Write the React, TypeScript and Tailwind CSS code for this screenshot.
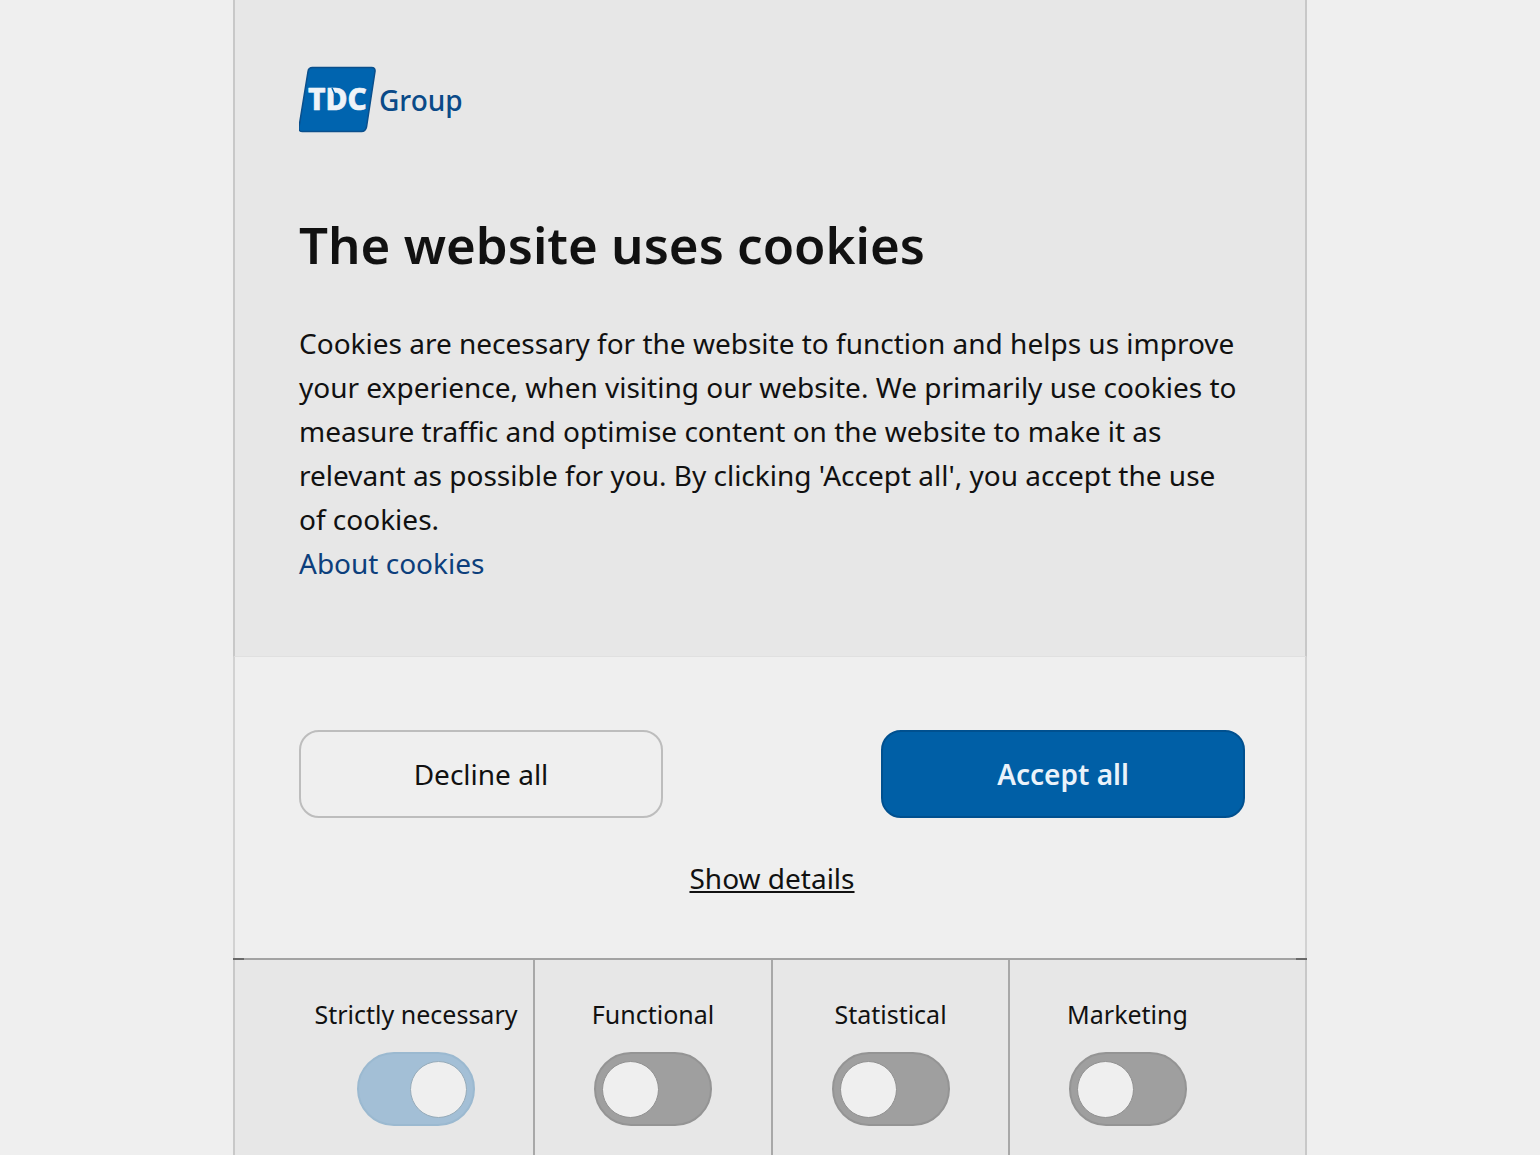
import React, { useState } from 'react';

interface Category {
  id: string;
  label: string;
  locked?: boolean;
}

const categories: Category[] = [
  { id: 'necessary', label: 'Strictly necessary', locked: true },
  { id: 'functional', label: 'Functional' },
  { id: 'statistical', label: 'Statistical' },
  { id: 'marketing', label: 'Marketing' },
];

const Logo: React.FC = () => (
  <svg width="168" height="72" viewBox="0 0 168 72" role="img" aria-label="TDC Group">
    <path
      d="M13.500 3.500H72.500Q76.500 3.500 76 7.500L67.500 63Q66.500 67.500 62.500 67.500H3.500Q-1 67.500 0 63L9 7.500Q9.500 3.500 13.500 3.500Z"
      fill="#0064af"
      stroke="#0a4f8c"
      strokeWidth="1.500"
    />
    <text
      x="9"
      y="46"
      fill="#eef3f8"
      stroke="#eef3f8"
      strokeWidth="0.600"
      strokeLinejoin="round"
      fontFamily="'Noto Sans', sans-serif"
      fontSize="30"
      fontWeight="800"
    >
      TDC
    </text>
    {/* slit between the stem and bowl of the D */}
    <path d="M33 24L37 33V40" fill="none" stroke="#0064af" strokeWidth="1.500" />
    <text x="80" y="47" fill="#0a4a88" fontFamily="'Noto Sans', sans-serif" fontSize="28" fontWeight="500">
      Group
    </text>
  </svg>
);

interface ToggleProps {
  category: Category;
  checked: boolean;
  onChange: (checked: boolean) => void;
}

const Toggle: React.FC<ToggleProps> = ({ category, checked, onChange }) => (
  <div className="flex flex-col items-center border-r-2 border-[#a8a8a8] pt-[34px] pb-8 last:border-r-0">
    <label htmlFor={category.id} className="text-[25px] leading-10 whitespace-nowrap">
      {category.label}
    </label>
    <input
      id={category.id}
      type="checkbox"
      role="switch"
      checked={checked}
      disabled={category.locked}
      onChange={e => onChange(e.target.checked)}
      className="mt-[18px] flex h-[74px] w-[118px] appearance-none items-center rounded-full border-2 border-[#949494] bg-[#9f9f9f] px-[6px] before:h-[57px] before:w-[57px] before:rounded-full before:border before:border-[#919191] before:bg-[#efefef] checked:justify-end checked:border-[#9bb9d0] checked:bg-[#a3bfd6] checked:before:border-[#96abb9]"
    />
  </div>
);

export default function App() {
  const [selected, setSelected] = useState<Record<string, boolean>>({ necessary: true });

  const setAll = (value: boolean) => {
    setSelected(Object.fromEntries(categories.map(c => [c.id, c.locked || value])));
  };

  return (
    <div className="min-h-screen bg-[#efefef] font-['Noto_Sans',sans-serif] text-[#111111]">
      <main className="mx-auto flex min-h-screen w-full max-w-[1074px] flex-col">
        <section className="border-x-2 border-b border-x-[#c8c8c8] border-b-[#e0e0e0] bg-[#e7e7e7] pt-16 pr-15 pb-[71px] pl-16">
          <Logo />
          <h1 className="mt-[76px] text-[51px] leading-16 font-semibold">The website uses cookies</h1>
          <p className="mt-[45px] text-[28px] leading-[44px]">
            Cookies are necessary for the website to function and helps us improve your experience, when visiting our
            website. We primarily use cookies to measure traffic and optimise content on the website to make it as
            relevant as possible for you. By clicking 'Accept all', you accept the use of cookies.
          </p>
          <a href="#about" className="text-[28px] leading-[44px] text-[#0d3f7c]">
            About cookies
          </a>
        </section>

        {/* Actions */}
        <section className="border-x-2 border-[#d2d2d2] pt-[73px] pr-15 pb-[58px] pl-16">
          <div className="flex justify-between gap-8">
            <button
              type="button"
              onClick={() => setAll(false)}
              className="h-[88px] w-[364px] rounded-[20px] border-2 border-[#bdbdbd] text-[28px]"
            >
              Decline all
            </button>
            <button
              type="button"
              onClick={() => setAll(true)}
              className="h-[88px] w-[364px] rounded-[20px] border-2 border-[#00508f] bg-[#005fa6] text-[28px] font-semibold text-[#eaf2fa]"
            >
              Accept all
            </button>
          </div>
          <div className="mt-[38px] text-center">
            <a href="#details" className="text-[28px] leading-[44px] underline decoration-2 underline-offset-2">
              Show details
            </a>
          </div>
        </section>

        <div className="flex h-[2px] justify-between bg-[#a3a3a3]">
          <span className="w-[11px] bg-[#6a6a6a]" />
          <span className="w-[11px] bg-[#6a6a6a]" />
        </div>

        <section className="grid flex-1 grid-cols-[236fr_238fr_237fr_235fr] border-x-2 border-[#c8c8c8] bg-[#e7e7e7] pr-15 pl-16">
          {categories.map(category => (
            <Toggle
              key={category.id}
              category={category}
              checked={!!selected[category.id]}
              onChange={value => setSelected({ ...selected, [category.id]: value })}
            />
          ))}
        </section>
      </main>
    </div>
  );
}
